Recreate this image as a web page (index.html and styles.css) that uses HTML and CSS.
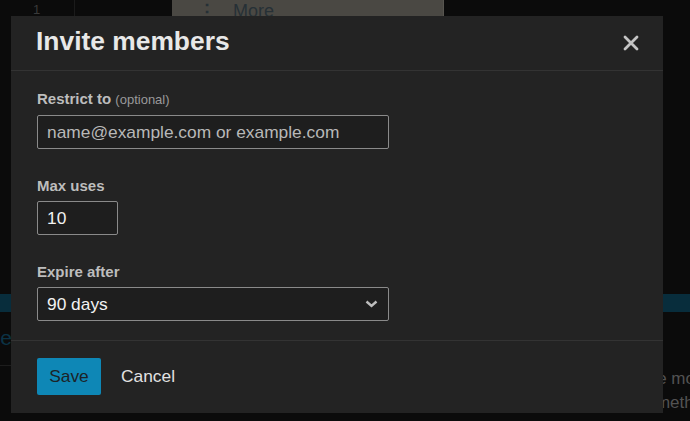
FILE: index.html
```html
<!DOCTYPE html>
<html lang="en">
<head>
  <meta charset="UTF-8" />
  <meta name="viewport" content="width=device-width, initial-scale=1.0"/>
  <title>Invite members</title>
  <link rel="stylesheet" href="styles.css">
</head>
<body>
  <div class="page">
    <div class="topbar">
      <div class="num-cell">1</div>
      <div class="more-btn"><span class="dots">&#8942;</span>More</div>
    </div>
    <div class="banner"></div>
    <div class="content">
      <div class="side">
        <div class="side-title"><span>Schedule</span></div>
        <div class="side-rule"></div>
      </div>
      <div class="text">
        <p class="line-1">the more</p>
        <p>something</p>
      </div>
    </div>
  </div>

  <div class="modal">
    <div class="modal-header">
      <h2>Invite members</h2>
      <button class="close" aria-label="Close">
        <svg width="16" height="16" viewBox="0 0 16 16">
          <path d="M2 2 L14 14 M14 2 L2 14" stroke="#c4c4c4" stroke-width="2.8" stroke-linecap="round" fill="none"/>
        </svg>
      </button>
    </div>

    <div class="modal-body">
      <div class="field">
        <label>Restrict to <span class="optional">(optional)</span></label>
        <input class="input wide" type="text" placeholder="name@example.com or example.com">
      </div>
      <div class="field">
        <label>Max uses</label>
        <input class="input short" type="text" value="10">
      </div>
      <div class="field">
        <label>Expire after</label>
        <div class="select-wrap">
          <select class="input wide">
            <option>90 days</option>
          </select>
          <svg class="chevron" width="13" height="8" viewBox="0 0 13 8">
            <path d="M1.5 1.5 L6.5 6 L11.5 1.5" stroke="#bdbdbd" stroke-width="2.4" fill="none"/>
          </svg>
        </div>
      </div>
    </div>

    <div class="modal-footer">
      <button class="btn-save">Save</button>
      <button class="btn-cancel">Cancel</button>
    </div>
  </div>
</body>
</html>
```

FILE: styles.css
```css
body {
  margin: 0;
  padding: 0;
  font-family: 'Liberation Sans', Arial, sans-serif;
  background: #0b0b0b;
  overflow: hidden;
}

.page {
  width: 690px;
  height: 421px;
  overflow: hidden;
}

/* page behind the modal */
.topbar {
  display: flex;
  height: 16px;
  overflow: hidden;
}

.num-cell {
  width: 75px;
  border-right: 1px solid #1b1b1b;
  color: #3a3a3a;
  font-size: 13px;
  padding: 2px 0 0 33px;
  box-sizing: border-box;
}

.more-btn {
  margin-left: 97px;
  width: 272px;
  background: #4a4843;
  border-right: 1px solid #57554f;
  box-sizing: border-box;
  color: #263036;
  font-size: 18px;
  line-height: 18px;
  padding: 2px 0 0 26px;
}

.dots {
  margin-right: 17px;
  font-weight: bold;
}

.banner {
  margin-top: 278px;
  height: 18px;
  background: #082d3c;
}

.content {
  display: flex;
  overflow: hidden;
}

.side {
  width: 12px;
  flex-shrink: 0;
  overflow: hidden;
  padding-top: 14px;
}

.side-title {
  display: flex;
  justify-content: flex-end;
  white-space: nowrap;
  color: #0b3346;
  font-size: 21px;
  line-height: 24px;
}

.side-rule {
  margin-top: 15px;
  border-top: 1px solid #1d1d1d;
}

.text {
  flex: 1;
  min-width: 0;
  padding: 55px 0 0 626px;
  white-space: nowrap;
  color: #525252;
  font-size: 17px;
}

.text p {
  margin: 0;
  line-height: 24px;
}

.text .line-1 {
  padding-left: 5px;
}

/* modal */
.modal {
  position: fixed;
  top: 16px;
  left: 11px;
  width: 652px;
  background: #232323;
  color: #ddd;
}

.modal-header {
  display: flex;
  align-items: center;
  justify-content: space-between;
  padding: 10px 24px 14px 25px;
  border-bottom: 1px solid #333;
}

.modal-header h2 {
  margin: 0;
  font-size: 26.4px;
  line-height: 30px;
  font-weight: bold;
  color: #e8e8e8;
}

.close {
  background: none;
  border: none;
  padding: 0;
  margin-top: 4px;
  width: 16px;
  height: 16px;
  cursor: pointer;
}

.close svg {
  display: block;
}

.modal-body {
  padding: 18px 26px 19px;
}

.field + .field {
  margin-top: 27px;
}

.field label {
  display: block;
  font-size: 15px;
  line-height: 20px;
  font-weight: bold;
  color: #bdbdbd;
  margin-bottom: 5px;
}

.optional {
  font-size: 13px;
  font-weight: normal;
  color: #9a9a9a;
}

.input {
  display: block;
  box-sizing: border-box;
  height: 34px;
  margin: 0;
  padding: 0 9px;
  border: 1px solid #8a8a8a;
  border-radius: 2px;
  background: #1e1e1e;
  color: #f2f2f2;
  font-family: 'Liberation Sans', Arial, sans-serif;
  font-size: 17.35px;
  outline: none;
}

.input::placeholder {
  color: #b8b8b8;
}

.wide {
  width: 352px;
}

.short {
  width: 81px;
}

.select-wrap {
  position: relative;
  width: 352px;
}

select.input {
  appearance: none;
  -webkit-appearance: none;
}

.chevron {
  position: absolute;
  right: 11px;
  top: 13px;
  pointer-events: none;
}

.modal-footer {
  display: flex;
  align-items: center;
  gap: 7px;
  padding: 17px 26px 18px;
  border-top: 1px solid #333;
}

.btn-save {
  height: 37px;
  width: 64px;
  border: none;
  border-radius: 2px;
  background: #0e87b6;
  color: #1c2328;
  font-family: 'Liberation Sans', Arial, sans-serif;
  font-size: 17.35px;
  padding: 0;
  cursor: pointer;
}

.btn-cancel {
  height: 37px;
  border: none;
  background: none;
  color: #e2e2e2;
  font-family: 'Liberation Sans', Arial, sans-serif;
  font-size: 17.35px;
  padding: 0 13px;
  cursor: pointer;
}
```
